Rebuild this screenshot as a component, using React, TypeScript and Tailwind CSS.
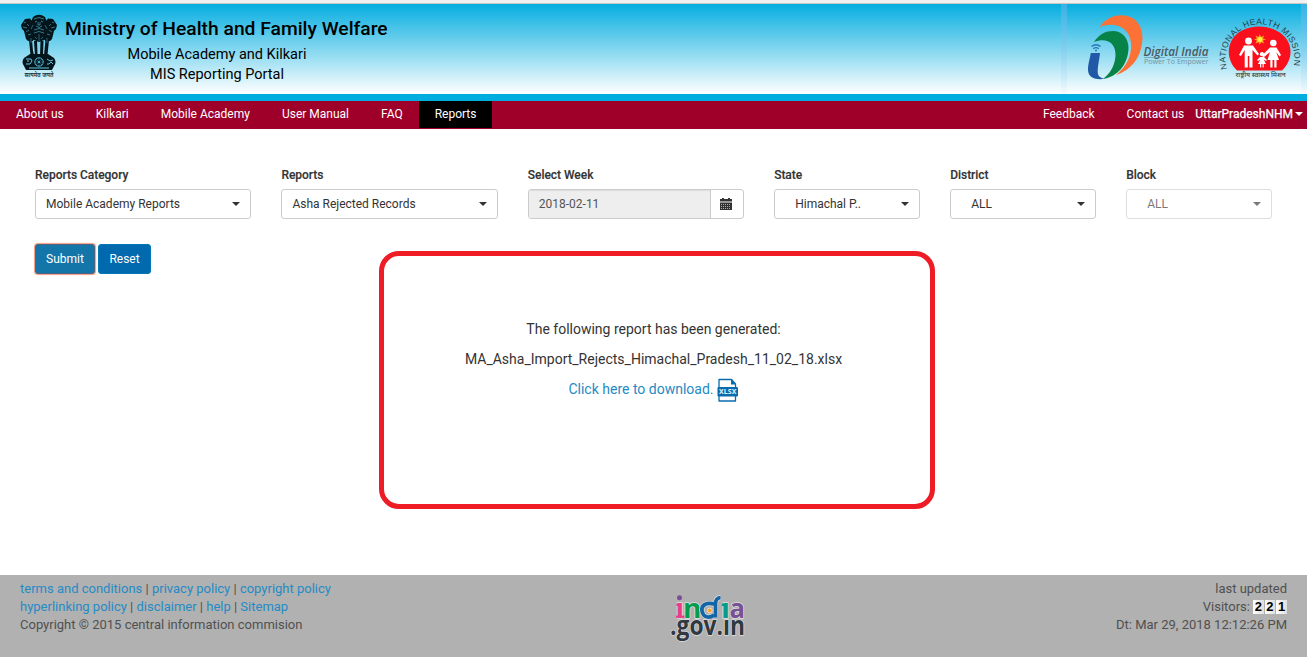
import React from "react";

function Emblem() {
  return (
    <svg width="38" height="66" viewBox="0 0 38 66" className="block">
      <g fill="#04161c">
        <path d="M13 3Q19-1.500 25 3L27 8L25 16L27 25L19 28L11 25L13 16L11 8Z" />
        <path d="M10 4.500L5 5L1 11L2 15L4 17L6 25L8 27L13 27L14 16L12 7Z" />
        <path d="M28 4.500L33 5L37 11L36 15L34 17L32 25L30 27L25 27L24 16L26 7Z" />
        <path d="M9 26L12 26L13 37L14 41L10.500 41Z M14 27L17 27L17.500 40L18 42L15 42Z M20.500 27L23.500 27L23 42L20 42Z M25.500 26L29 26L27.500 41L24 41Z" />
        <path d="M10 40H28L34 44Q37 48 34 52L32 56H6L4 52Q1 48 4 44Z" />
      </g>
      <g fill="none" stroke="#55bcd8" strokeWidth=".8">
        <path d="M14 5Q19 2 24 5M15 8L17 7M21 7L23 8M16 12Q19 15 22 12M18 8V11H20V8M14 16Q19 13 24 16M14 19Q19 16 24 19" opacity=".75" />
        <path d="M4 9L6 8M3 13L7 14M6 18L9 16M8 21L11 20M7 10L9 12M34 9L32 8M35 13L31 14M32 18L29 16M30 21L27 20M31 10L29 12" opacity=".7" />
        <path d="M15 23L17 25M23 23L21 25M19 20V27M11 24V29M27 24V29M13 11L11 15M25 11L27 15" opacity=".6" />
      </g>
      <circle cx="19" cy="48" r="4.200" fill="none" stroke="#55bfdc" strokeWidth="1" />
      <circle cx="19" cy="48" r="1" fill="#55bfdc" />
      <path d="M19 44V52M15 48H23M16.200 45.200L21.800 50.800M21.800 45.200L16.200 50.800" stroke="#55bfdc" strokeWidth=".3" />
      <path d="M6 45H11L12 47L10 50H6M7 47H9M27 45L30 47L33 46M27 50H29L31 48L33 50M9 54H29" fill="none" stroke="#65c5df" strokeWidth="1" />
      <text x="19" y="62.500" textAnchor="middle" textLength="29" lengthAdjust="spacingAndGlyphs" fontSize="6.500" fontWeight="600" fill="#12333d" className="font-['Noto_Sans',sans-serif]">सत्यमेव जयते</text>
    </svg>
  );
}

function DigitalIndia() {
  return (
    <svg width="128" height="72" viewBox="1085 12 128 72" className="block shrink-0">
      <path d="M1099.500 27C1106 18 1114 15 1123 15.300C1135 16 1142.500 25 1142.500 38C1142 56 1132 70 1116 75C1127 66 1132 55 1131 43C1129.500 28 1116 21 1099.500 27Z" fill="#fc7135" />
      <path d="M1094 42C1099 34 1106 31 1113 31C1122 31 1128.500 38 1128.500 48C1128 65 1117 77 1103 79C1112 72 1115.500 63 1115.500 54C1115 42 1106 37.500 1094 42Z" fill="#078348" />
      <path d="M1090.800 53H1100C1099 62 1097 69 1098 74C1098.500 76 1100 77.500 1104 79C1092 80 1087.500 76 1088 68C1088.300 63 1090 58 1090.800 53Z" fill="#2259a6" />
      <g fill="none" stroke="#2475b5" strokeWidth="1.300">
        <path d="M1091.500 46.500Q1096 43 1100.500 46.500" />
        <path d="M1093.200 48.700Q1096 46.500 1098.800 48.700" />
      </g>
      <circle cx="1096" cy="50.500" r="1" fill="#2475b5" />
      <text x="1143.500" y="55.500" fontSize="12" fontStyle="italic" fontWeight="600" textLength="65" lengthAdjust="spacingAndGlyphs" fill="#4b5962" className="font-['Open_Sans',sans-serif]">Digital India</text>
      <path d="M1144 57.500H1165M1172 57.500H1208" stroke="#6c8591" strokeWidth=".6" />
      <text x="1144" y="64" fontSize="6.400" textLength="64.500" lengthAdjust="spacingAndGlyphs" fill="#76929e" className="font-['Open_Sans',sans-serif]">Power To Empower</text>
    </svg>
  );
}

function HealthMission() {
  return (
    <svg width="88" height="68" viewBox="1216 14 88 68" className="block">
      <defs>
        <path id="mission-arc" d="M1227 69A34.500 34.500 0 1 1 1293.500 67" />
      </defs>
      <path d="M1237 70.500C1224 58 1227 38 1242 30.500C1253 25 1266 25 1277 31C1293 39 1295 58 1282 70.500Z" fill="#fa101c" />
      <text fontSize="8.500" fill="#27424c" className="font-['Liberation_Sans',sans-serif]">
        <textPath href="#mission-arc" textLength="125" lengthAdjust="spacing">NATIONAL HEALTH MISSION</textPath>
      </text>
      <path d="M1259.800 34L1261 37L1264 35.500L1263 38.500L1266 39.500L1263 40.500L1264 43.500L1261 42.300L1259.800 45L1258.600 42.300L1255.500 43.500L1256.800 40.500L1254 39.500L1256.800 38.500L1255.500 35.500L1258.600 37Z" fill="#ff9f20" />
      <circle cx="1259.800" cy="39.500" r="2.500" fill="#fff13b" />
      <g fill="#fff">
        <circle cx="1248.500" cy="41" r="3.400" />
        <path d="M1244 45.500H1253L1259 54L1257.500 55.500L1252.500 50V67.500H1249.300V56H1247.800V67.500H1244.700V50L1241 56L1239 55Z" />
        <circle cx="1273.300" cy="43" r="3.300" />
        <path d="M1270 47.500H1276.500L1281 55L1279.500 56.500L1276.200 52L1279 60H1276.500V67.500H1274.300V60H1272.500V67.500H1270.300V60H1267.500L1270 52L1263.500 57.500L1262 55.500Z" />
        <circle cx="1262" cy="54.200" r="2.100" />
        <path d="M1260 57H1264L1267 60L1266 61L1263.700 59.500L1266 64H1263.800V67.500H1262.600V64H1261.300V67.500H1260.100V64H1258L1260.300 59.500L1258 61L1257 60Z" />
      </g>
      <text x="1235.500" y="76.500" fontSize="6.500" fontWeight="500" textLength="50" lengthAdjust="spacingAndGlyphs" fill="#29434b" className="font-['Noto_Sans',sans-serif]">राष्ट्रीय स्वास्थ्य मिशन</text>
    </svg>
  );
}

function IndiaGov() {
  return (
    <svg width="78" height="50" viewBox="668 593 78 50" className="block font-['Open_Sans',sans-serif] font-bold">
      <g stroke="#dedede" strokeWidth="1.600" paintOrder="stroke" strokeLinejoin="round" fontSize="27">
        <text x="675.500" y="617.800" textLength="8.500" lengthAdjust="spacingAndGlyphs" fill="#e73e87">ı</text>
        <text x="683" y="617.800" textLength="18.500" lengthAdjust="spacingAndGlyphs" fill="#079b50">n</text>
        <text x="721" y="617.800" textLength="9" lengthAdjust="spacingAndGlyphs" fill="#079b8e">ı</text>
        <text x="729.500" y="617.800" textLength="15.500" lengthAdjust="spacingAndGlyphs" fill="#785194">a</text>
        <text x="670" y="635" fontSize="26" textLength="75" lengthAdjust="spacingAndGlyphs" fill="#303841">.gov.ın</text>
      </g>
      <path d="M676.500 604.800H680" stroke="#e73e87" strokeWidth="2.500" />
      <path d="M676 616.700H684.500" stroke="#e73e87" strokeWidth="2.200" />
      <path d="M721.800 604.800H726" stroke="#079b8e" strokeWidth="2.500" />
      <path d="M714 604C705 602 701 606 702 611C703 617 709 619 714 615M715.500 617.500V604Q715.500 598 720.500 597.500" fill="none" stroke="#dedede" strokeWidth="5" />
      <path d="M714 604C705 602 701 606 702 611C703 617 709 619 714 615M715.500 617.500V604Q715.500 598 720.500 597.500" fill="none" stroke="#1465a5" strokeWidth="3.700" />
      <circle cx="709.800" cy="610.500" r="2.400" fill="#f6a52b" stroke="#eee" strokeWidth=".7" />
      <circle cx="679.500" cy="597.800" r="2.500" fill="#7b4e96" />
    </svg>
  );
}

function Caret({ light = false }: { light?: boolean }) {
  return (
    <svg width="8" height="4" viewBox="0 0 8 4" className="block shrink-0">
      <path d="M0 0H8L4 4Z" fill={light ? "#fff" : "#333"} />
    </svg>
  );
}

function CalendarIcon() {
  return (
    <svg width="12" height="12" viewBox="0 0 12 12" className="block">
      <path d="M0 1H2V0H4V1H8V0H10V1H12V3.500H0ZM0 4.500H12V12H0Z" fill="#333" />
      <path d="M1 6.500H11M1 8.500H11M1 10.500H11" stroke="#fff" strokeWidth=".8" strokeDasharray="1 1" opacity=".75" />
    </svg>
  );
}

function XlsxIcon() {
  return (
    <svg width="22" height="25" viewBox="0 0 22 25" className="block">
      <path d="M2 1.500H14.500L18.500 6V23H2Z" fill="#fff" stroke="#086cad" strokeWidth="1.300" strokeLinejoin="round" />
      <path d="M14 1L19 6.500H14Z" fill="#086cad" />
      <rect x="0.500" y="9" width="20.500" height="9.500" rx="1.200" fill="#086cad" />
      <text x="2" y="16.300" fontSize="7" fontWeight="700" textLength="17.500" lengthAdjust="spacing" fill="#e8f2f8" className="font-['Noto_Sans',sans-serif]">XLSX</text>
    </svg>
  );
}

function Label({ text }: { text: string }) {
  return <div className="mb-[6px] h-[17px] text-xs leading-[19px] font-medium tracking-[-0.03px] [-webkit-text-stroke:0.15px_#333]">{text}</div>;
}

function Field({ label, value, indent = false, disabled = false }: { label: string; value: string; indent?: boolean; disabled?: boolean }) {
  return (
    <div>
      <Label text={label} />
      <button className={`flex h-[30px] w-full items-center justify-between rounded-[3px] border border-[#ccc] pr-[10px] text-left ${indent ? "pl-5" : "pl-[10px]"} ${disabled ? "opacity-65" : ""}`}>
        <span>{value}</span>
        <Caret />
      </button>
    </div>
  );
}

function DateField() {
  return (
    <div>
      <Label text="Select Week" />
      <div className="flex h-[30px] overflow-hidden rounded-[3px] border border-[#ccc]">
        <div className="flex grow items-center bg-[#eee] pl-[10px] text-[#555] shadow-[inset_0_1px_1px_rgba(0,0,0,0.075)]">2018-02-11</div>
        <button className="flex w-[33px] items-center justify-center border-l border-[#ccc] pr-[2px] pb-px"><CalendarIcon /></button>
      </div>
    </div>
  );
}

const menu = ["About us", "Kilkari", "Mobile Academy", "User Manual", "FAQ"];

export default function App() {
  return (
    <div className="flex h-[657px] w-[1307px] flex-col overflow-hidden bg-white font-[Roboto,sans-serif] text-xs text-[#333]">
      <div className="h-1 shrink-0 border-b border-[#c9c5c1] bg-[#f2f1f0]" />
      <header className="flex h-[90px] shrink-0 justify-between bg-linear-to-b/srgb from-[#06aee0] to-white text-black">
        <div className="flex pt-[10px] pl-5">
          <Emblem />
          <div className="ml-[7px] w-[322px] text-center whitespace-nowrap">
            <h1 className="mt-[3px] text-[19.250px] leading-6 font-medium">Ministry of Health and Family Welfare</h1>
            <p className="mt-[4px] pr-[18px] text-[14.500px] leading-5">Mobile Academy and Kilkari</p>
            <p className="pr-[18px] text-[14.500px] leading-5">MIS Reporting Portal</p>
          </div>
        </div>
        <div className="flex w-[246px]">
          <div className="w-[6px] shrink-0 bg-linear-to-b from-[#88b8ee]/40 to-[#88b8ee]/5" />
          <div className="flex grow pt-2 pl-[18px]">
            <DigitalIndia />
            <div className="mt-[2px] ml-[3px] w-[85px] shrink-0"><HealthMission /></div>
          </div>
          <div className="w-[6px] shrink-0 bg-linear-to-b from-[#88b8ee]/40 to-[#88b8ee]/5" />
        </div>
      </header>
      <div className="h-[7px] shrink-0 bg-[#00addf]" />
      <nav className="flex h-7 shrink-0 items-start justify-between bg-[#9e002a] leading-[26px] text-white">
        <div className="flex">
          {menu.map((item) => <a key={item} className="px-4">{item}</a>)}
          <a className="h-[27px] bg-black px-4">Reports</a>
        </div>
        <div className="flex">
          <a className="mr-8">Feedback</a>
          <a className="mr-[11px]">Contact us</a>
          <a className="flex items-center gap-[2px] pr-1 [-webkit-text-stroke:0.25px_white]"><span>UttarPradeshNHM</span><Caret light /></a>
        </div>
      </nav>
      <main className="h-[446px] shrink-0 px-[35px] pt-[37px]">
        <div className="grid grid-cols-[216.400px_216.400px_216.400px_146px_146px_146px] gap-x-[30px]">
          <Field label="Reports Category" value="Mobile Academy Reports" />
          <Field label="Reports" value="Asha Rejected Records" />
          <DateField />
          <Field label="State" value="Himachal P.." indent />
          <Field label="District" value="ALL" indent />
          <Field label="Block" value="ALL" indent disabled />
        </div>
        <div className="mt-[25px] flex h-[30px] gap-[3px] text-white">
          <button className="w-[60px] rounded-[3px] border border-[#4d6580] bg-[#1475a9] shadow-[0_0_1px_1px_#f59b84]">Submit</button>
          <button className="w-[53px] rounded-[3px] border border-[#0078b6] bg-[#0169ae]">Reset</button>
        </div>
        <section className="-mt-[23px] ml-[344px] flex h-[258px] w-[556px] flex-col items-center rounded-[20px] border-[5px] border-[#ee1c25] pt-[58px] pr-[7px] text-sm">
          <p className="h-[30px] leading-[30px]">The following report has been generated:</p>
          <p className="h-[30px] leading-[30px]">MA_Asha_Import_Rejects_Himachal_Pradesh_11_02_18.xlsx</p>
          <a className="flex h-[30px] items-center gap-[3px] text-[#258bc5]"><span>Click here to download.</span><span className="pt-[3px]"><XlsxIcon /></span></a>
        </section>
      </main>
      <footer className="grid h-[82px] shrink-0 grid-cols-[648px_78px_1fr] bg-[#b1b1b1] px-5 pt-[5px] text-[13px] leading-[18px] text-[#505050]">
        <div className="whitespace-nowrap">
          <p><a className="text-[#258bc5]">terms and conditions</a> | <a className="text-[#258bc5]">privacy policy</a> | <a className="text-[#258bc5]">copyright policy</a></p>
          <p><a className="text-[#258bc5]">hyperlinking policy</a> | <a className="text-[#258bc5]">disclaimer</a> | <a className="text-[#258bc5]">help</a> | <a className="text-[#258bc5]">Sitemap</a></p>
          <p>Copyright © 2015 central information commision</p>
        </div>
        <div className="pt-[13px]"><IndiaGov /></div>
        <div className="text-right">
          <p>last updated</p>
          <p className="flex h-[18px] items-center justify-end"><span className="mr-[3px]">Visitors:</span>
            <span className="flex gap-px font-['Liberation_Sans',sans-serif] font-bold text-black">
              {["2", "2", "1"].map((digit, i) => <span key={i} className="h-[14px] w-[10.700px] bg-linear-to-r from-white to-[#dedede] text-center leading-[14px]">{digit}</span>)}
            </span>
          </p>
          <p>Dt: Mar 29, 2018 12:12:26 PM</p>
        </div>
      </footer>
    </div>
  );
}
